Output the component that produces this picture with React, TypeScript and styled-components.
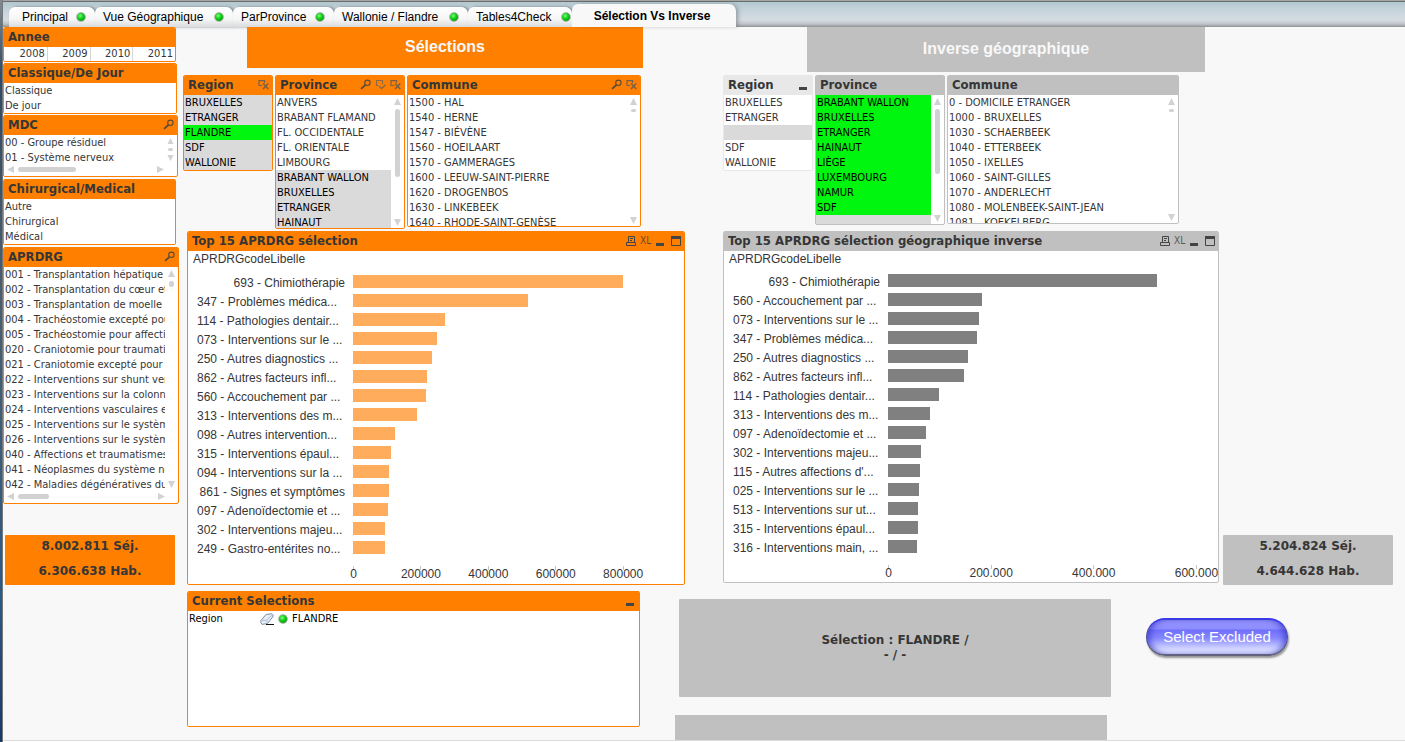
import React from "react";
import styled, { createGlobalStyle, css } from "styled-components";

const ORANGE = "#ff8000";
const GREY = "#c0c0c0";
const INK = "#363636";
const UI = `"DejaVu Sans Condensed", "DejaVu Sans", Tahoma, sans-serif`;
const ARIAL = `"Liberation Sans", Arial, sans-serif`;
const WIDE = `"DejaVu Sans", Verdana, sans-serif`;

const GlobalStyle = createGlobalStyle`
  * { box-sizing: border-box; }
  body { margin: 0; background: #f8f8f8; color: ${INK}; font: 11px/15px ${UI}; }
  button { font: inherit; color: inherit; border: 0; padding: 0; margin: 0; background: none; cursor: pointer; }
  ul { list-style: none; margin: 0; padding: 0; }
  h1, h2, p { margin: 0; }
`;

/* ---------- page frame ---------- */

const Page = styled.div`
  display: flex;
  min-height: 100vh;
  overflow: hidden;
`;

const WindowEdge = styled.div`
  flex: 0 0 3px;
  border-right: 1px solid #777;
  background: linear-gradient(#7f8c94, #2f4a66 10%, #4a5f70 40%, #2b5a86 80%, #173a63);
`;

const Sheet = styled.div`
  flex: 1;
  min-width: 0;
  display: flex;
  flex-direction: column;
  border-bottom: 1px solid #fff;
`;

const TabBar = styled.nav`
  display: flex;
  align-items: flex-end;
  height: 27px;
  padding-left: 6px;
  border-top: 1px solid #a5a5a2;
  box-shadow: inset 0 1px 0 #6a6e6e;
  background: linear-gradient(#b3c8cf 1px, #c3d2d9 8px, #d6dce4 19px, #bfc4ca 23px, #8e9296 26px);
`;

const Tab = styled.button<{ $width: number; $active?: boolean; $tight?: boolean }>`
  display: flex;
  align-items: center;
  justify-content: ${(p) => (p.$active ? "center" : "space-between")};
  width: ${(p) => p.$width}px;
  height: ${(p) => (p.$active ? 23 : 20)}px;
  padding: 0 ${(p) => (p.$tight ? 1 : 9)}px 0 8px;
  border-radius: 6px 7px 0 0;
  font: 12px/18px ${ARIAL};
  color: #000;
  white-space: nowrap;
  background: linear-gradient(#fff, #f6f6f6 60%, #d9dbdd);
  box-shadow: 2px 0 3px rgba(60, 66, 72, 0.55);
  &:first-child { padding-left: 13px; }
  ${(p) =>
    p.$active &&
    css`
      position: relative;
      z-index: 1;
      padding-right: 12px;
      font-weight: bold;
      background: #f8f8f8;
      box-shadow: 3px 0 4px -1px rgba(60, 66, 72, 0.4);
    `}
`;

const Dot = styled.span`
  flex: none;
  width: 10px;
  height: 10px;
  border: 1px solid #b4bab4;
  border-radius: 50%;
  background: radial-gradient(circle at 40% 35%, #7dff7d, #14d01a 40%, #0a9a12 80%);
`;

const Body = styled.div`
  flex: 1;
  display: flex;
  padding-right: 12px;
  border-bottom: 1px solid #dcdcdc;
`;

const Sidebar = styled.aside`
  flex: 0 0 176px;
  display: flex;
  flex-direction: column;
  align-items: flex-start;
  gap: 2px;
`;

const SidebarGroup = styled.div`
  display: flex;
  flex-direction: column;
  gap: 1px;
`;

const Main = styled.main`
  flex: 1;
  min-width: 0;
  margin-left: 4px;
  display: flex;
  flex-direction: column;
`;

const CompareRow = styled.div`
  display: flex;
`;

const Side = styled.section<{ $grow: number; $before?: number }>`
  flex: ${(p) => p.$grow} 1 0;
  min-width: 0;
  margin-left: ${(p) => p.$before ?? 0}px;
`;

const Banner = styled.h1<{ $tone: string; $height: number; $left: number; $right: number }>`
  display: flex;
  align-items: center;
  justify-content: center;
  height: ${(p) => p.$height}px;
  margin: 0 ${(p) => p.$right}px 0 ${(p) => p.$left}px;
  padding-bottom: 2px;
  background: ${(p) => p.$tone};
  color: #f8f8f8;
  font: bold 16px/20px ${ARIAL};
`;

const ListRow = styled.div<{ $top: number; $right: number }>`
  display: flex;
  align-items: flex-start;
  gap: 2px;
  height: 154px;
  margin: ${(p) => p.$top}px ${(p) => p.$right}px 2px 0;
`;

/* ---------- framed object ---------- */

const Frame = styled.section<{ $tone: string; $width?: number; $height?: number; $indent?: number }>`
  display: flex;
  flex-direction: column;
  ${(p) => (p.$width ? `flex: none; width: ${p.$width}px;` : "flex: 1; min-width: 0;")}
  ${(p) => p.$height && `height: ${p.$height}px;`}
  margin-left: ${(p) => p.$indent ?? 0}px;
  border: 1px solid ${(p) => p.$tone};
  border-radius: 2px;
  background: #fff;
  overflow: hidden;
`;

const FrameHead = styled.header<{ $tone: string }>`
  flex: none;
  display: flex;
  align-items: center;
  gap: 4px;
  height: 19px;
  padding: 0 3px 1px 4px;
  background: ${(p) => p.$tone};
`;

const FrameTitle = styled.h2`
  flex: 1;
  min-width: 0;
  overflow: hidden;
  white-space: nowrap;
  font: bold 13px/18px ${UI};
`;

const IconButton = styled.button`
  flex: none;
  display: block;
  width: 11px;
  height: 12px;
  svg { display: block; }
`;

const ExcelButton = styled(IconButton)`
  font: 10px/12px ${UI};
  opacity: 0.75;
`;

const FrameBody = styled.div`
  flex: 1;
  min-height: 0;
  display: flex;
`;

const Items = styled.ul`
  flex: 1;
  min-width: 0;
  overflow: hidden;
`;

type ItemState = "optional" | "selected" | "excluded";

const Item = styled.button<{ $state: ItemState }>`
  display: block;
  width: 100%;
  height: 15px;
  padding-left: 1px;
  text-align: left;
  white-space: nowrap;
  overflow: hidden;
  line-height: 14px;
  background: ${(p) => ({ optional: "#fff", selected: "#00f50f", excluded: "#dadada" })[p.$state]};
  color: ${(p) => (p.$state === "optional" ? INK : "#000")};
`;

const YearRow = styled.div`
  flex: 1;
  display: grid;
  grid-template-columns: repeat(4, 1fr);
`;

const Year = styled.button`
  padding-right: 2px;
  text-align: right;
  line-height: 14px;
  & + & { border-left: 1px solid #d6d6d6; }
`;

/* ---------- scroll bars ---------- */

const VTrack = styled.div`
  flex: 0 0 11px;
  display: flex;
  flex-direction: column;
  align-items: center;
  padding: 3px 0 2px;
`;

const HTrack = styled.div`
  flex: 0 0 11px;
  display: flex;
  align-items: center;
  padding: 0 13px 0 3px;
`;

const Thumb = styled.span<{ $w: number; $h: number }>`
  width: ${(p) => p.$w}px;
  height: ${(p) => p.$h}px;
  margin: 4px;
  border-radius: 3px;
  background: #d2d2d2;
`;

const Spring = styled.span`
  flex: 1;
`;

const Arrow = ({ d }: { d: string }) => (
  <svg width="7" height="7" viewBox="0 0 7 7" aria-hidden="true">
    <path d={d} fill="#d2d2d2" />
  </svg>
);

const VScroll = ({ thumb }: { thumb: number }) => (
  <VTrack>
    <Arrow d="M3.5 0 7 7H0z" />
    <Thumb $w={5} $h={thumb} />
    <Spring />
    <Arrow d="M3.5 7 7 0H0z" />
  </VTrack>
);

const HScroll = ({ thumb }: { thumb: number }) => (
  <HTrack>
    <Arrow d="M0 3.5 7 0V7z" />
    <Thumb $w={thumb} $h={5} />
    <Spring />
    <Arrow d="M7 3.5 0 0V7z" />
  </HTrack>
);

/* ---------- icons ---------- */

type IconName = "search" | "check" | "clear" | "print" | "excel" | "min" | "max";

const drawings: Record<Exclude<IconName, "excel">, React.ReactNode> = {
  search: (
    <g fill="none" stroke="#5c4a36">
      <circle cx="7.4" cy="3.8" r="2.7" strokeWidth="1.1" />
      <path d="M5.4 6 1 9.8" strokeWidth="1.7" />
    </g>
  ),
  check: (
    <g fill="none" stroke="#8a6a48" strokeWidth="1.1">
      <path d="M3.5 6.5H1.5v-5h6V5" />
      <path d="M4.2 7.2l2.3 2.3L10.6 5.8" strokeWidth="1.6" />
    </g>
  ),
  clear: (
    <g fill="none" stroke="#77604a" strokeWidth="1.2">
      <path d="M4 6.5H1V1.7h5.5V4" />
      <path d="M5 4.5l5.2 5.5M10.2 4.5 5 10" strokeWidth="1.6" />
    </g>
  ),
  print: (
    <g fill="none" stroke="#444">
      <path d="M3.5 7.5v-6h6v6M1.5 7.5h9v3h-9zM5 3.5h3M5 5.5h2" />
    </g>
  ),
  min: <path d="M1 8h8v3H1z" fill="#444" />,
  max: (
    <g stroke="#444" fill="none">
      <path d="M1.5 1.5h9v9h-9z" />
      <path d="M1 2.5h10" strokeWidth="3" />
    </g>
  ),
};

const labels: Record<IconName, string> = {
  search: "Rechercher",
  check: "Sélectionner les exclus",
  clear: "Effacer",
  print: "Imprimer",
  excel: "Exporter vers Excel",
  min: "Réduire",
  max: "Agrandir",
};

const HeadIcon = ({ name }: { name: IconName }) =>
  name === "excel" ? (
    <ExcelButton aria-label={labels.excel}>XL</ExcelButton>
  ) : (
    <IconButton aria-label={labels[name]}>
      <svg width="11" height="12" viewBox="0 0 11 12" aria-hidden="true">
        {drawings[name]}
      </svg>
    </IconButton>
  );

/* ---------- list box ---------- */

type Entry = string | [string, ItemState];

type ListBoxProps = {
  title: string;
  items: Entry[];
  tone?: string;
  width?: number;
  height?: number;
  icons?: IconName[];
  vThumb?: number;
  hThumb?: number;
};

const ListBox = ({ title, items, tone = ORANGE, width, height, icons = [], vThumb, hThumb }: ListBoxProps) => (
  <Frame $tone={tone} $width={width} $height={height}>
    <FrameHead $tone={tone}>
      <FrameTitle>{title}</FrameTitle>
      {icons.map((name) => (
        <HeadIcon key={name} name={name} />
      ))}
    </FrameHead>
    <FrameBody>
      <Items>
        {items.map((entry, i) => {
          const [text, state] = typeof entry === "string" ? [entry, "optional" as ItemState] : entry;
          return (
            <li key={i}>
              <Item $state={state}>{text}</Item>
            </li>
          );
        })}
      </Items>
      {vThumb && <VScroll thumb={vThumb} />}
    </FrameBody>
    {hThumb && <HScroll thumb={hThumb} />}
  </Frame>
);

/* ---------- bar chart ---------- */

const ChartBody = styled.div<{ $gap: number }>`
  font: 12px/16px ${ARIAL};
  & > p { padding: 0 5px; margin-bottom: ${(p) => p.$gap}px; }
`;

const BarRow = styled.li<{ $label: number }>`
  display: grid;
  grid-template-columns: ${(p) => p.$label}px minmax(0, 1fr);
  align-items: center;
  height: 19px;
`;

const BarLabel = styled.span<{ $whole: boolean }>`
  padding: 2px 8px 0 9px;
  text-align: ${(p) => (p.$whole ? "right" : "left")};
  white-space: nowrap;
`;

const Bar = styled.span<{ $fill: string }>`
  display: block;
  height: 13px;
  background: ${(p) => p.$fill};
`;

const Axis = styled.div<{ $label: number }>`
  display: flex;
  margin: 9px 0 0 ${(p) => p.$label}px;
`;

const TickCell = styled.span`
  flex: none;
`;

const Tick = styled.span`
  display: flex;
  flex-direction: column;
  align-items: center;
  width: 1px;
  line-height: 9px;
  white-space: nowrap;
  &::before { content: ""; flex: none; width: 1px; height: 4px; background: #c4c4c4; }
`;

type ChartProps = {
  title: string;
  tone: string;
  fill: string;
  height: number;
  indent?: number;
  gap: number;
  label: number;
  max: number;
  ticks: string[];
  data: [string, number][];
};

const BarChart = ({ title, tone, fill, height, indent, gap, label, max, ticks, data }: ChartProps) => (
  <Frame $tone={tone} $height={height} $indent={indent}>
    <FrameHead $tone={tone}>
      <FrameTitle>{title}</FrameTitle>
      <HeadIcon name="print" />
      <HeadIcon name="excel" />
      <HeadIcon name="min" />
      <HeadIcon name="max" />
    </FrameHead>
    <ChartBody $gap={gap}>
      <p>APRDRGcodeLibelle</p>
      <ul>
        {data.map(([name, value]) => (
          <BarRow key={name} $label={label}>
            <BarLabel $whole={!name.endsWith("...")}>{name}</BarLabel>
            <Bar $fill={fill} style={{ width: `${(value / max) * 100}%` }} />
          </BarRow>
        ))}
      </ul>
      <Axis $label={label}>
        {ticks.map((t) => (
          <TickCell key={t} style={{ width: `${(200 / max) * 100}%` }}>
            <Tick>{t}</Tick>
          </TickCell>
        ))}
      </Axis>
    </ChartBody>
  </Frame>
);

/* ---------- totals, summary, action ---------- */

const Totals = styled.div<{ $tone: string }>`
  width: 170px;
  height: 50px;
  border-radius: 1px;
  background: ${(p) => p.$tone};
  text-align: center;
  font: bold 12px/22px ${WIDE};
  p { height: 25px; }
`;

const SidebarTotals = styled.div`
  margin: 29px 0 0 2px;
`;

const FarSide = styled.div`
  flex: none;
  align-self: flex-end;
  margin-left: 4px;
`;

const BottomRow = styled.div`
  flex: 1;
  display: flex;
  align-items: stretch;
  margin: 6px 0 0 4px;
`;

const CurrentSlot = styled.div`
  flex: 453 1 0;
  min-width: 0;
  display: flex;
  align-items: flex-start;
`;

const Selection = styled.div`
  display: grid;
  grid-template-columns: 71px 18px 14px auto;
  align-items: center;
  width: 100%;
  height: 15px;
  padding-left: 1px;
  color: #000;
`;

const SummaryColumn = styled.div`
  flex: 436 1 0;
  min-width: 0;
  display: flex;
  flex-direction: column;
  gap: 18px;
  margin-left: 35px;
  padding-top: 8px;
`;

const Summary = styled.div`
  display: flex;
  align-items: center;
  justify-content: center;
  height: 98px;
  margin-left: 4px;
  border-radius: 1px;
  background: ${GREY};
  text-align: center;
  font: bold 12px/15px ${WIDE};
`;

const SummaryNext = styled.div`
  flex: 1;
  min-height: 25px;
  margin-right: 4px;
  background: ${GREY};
`;

const ActionSlot = styled.div`
  flex: 247 1 0;
  margin-left: 35px;
  padding-top: 27px;
`;

const PillButton = styled.button`
  width: 142px;
  height: 38px;
  padding-bottom: 1px;
  border: 1px solid #4a4a9a;
  border-top: 2px solid #3a3ae6;
  border-bottom: 2px solid #62627e;
  border-radius: 19px;
  color: #fff;
  font: 15px/20px ${ARIAL};
  background: linear-gradient(#9a9aff, #8c8cff 9px, #6f6ffb 10px, #8686ff 18px, #d4d8ff 29px, #e8ecff);
  box-shadow: 1px 2px 2px rgba(0, 0, 0, 0.4), inset 5px 0 6px -2px rgba(40, 40, 190, 0.6),
    inset -5px 0 6px -2px rgba(40, 40, 190, 0.6);
`;

const Eraser = () => (
  <svg width="15" height="13" viewBox="0 0 15 13" aria-hidden="true">
    <path d="M1 7.5 6 1.5 11.5.8 13.3 2l-.6 2L7.5 10.5 2 11.4.8 9.6z" fill="#e6edf7" stroke="#7d8ca6" />
    <path d="M1.2 7.8 6.8 7.2 12.6 1.6M6.8 7.2l.6 3" fill="none" stroke="#b4c0d4" />
    <path d="M6 11.5h8" stroke="#111" />
  </svg>
);

/* ---------- data ---------- */

const tabs = [
  { name: "Principal", width: 86 },
  { name: "Vue Géographique", width: 138 },
  { name: "ParProvince", width: 101 },
  { name: "Wallonie / Flandre", width: 134 },
  { name: "Tables4Check", width: 104, tight: true },
];

const off = (s: string): Entry => [s, "excluded"];
const on = (s: string): Entry => [s, "selected"];

const aprdrg = [
  "001 - Transplantation hépatique",
  "002 - Transplantation du cœur et,",
  "003 - Transplantation de moelle o",
  "004 - Trachéostomie excepté pou",
  "005 - Trachéostomie pour affectio",
  "020 - Craniotomie pour traumatism",
  "021 - Craniotomie excepté pour tr",
  "022 - Interventions sur shunt ven",
  "023 - Interventions sur la colonne",
  "024 - Interventions vasculaires ex",
  "025 - Interventions sur le système",
  "026 - Interventions sur le système",
  "040 - Affections et traumatismes",
  "041 - Néoplasmes du système ner",
  "042 - Maladies dégénératives du s",
];

const selectionData: [string, number][] = [
  ["693 - Chimiothérapie", 801],
  ["347 - Problèmes médica...", 519],
  ["114 - Pathologies dentair...", 273],
  ["073 - Interventions sur le ...", 249],
  ["250 - Autres diagnostics ...", 234],
  ["862 - Autres facteurs infl...", 220],
  ["560 - Accouchement par ...", 217],
  ["313 - Interventions des m...", 190],
  ["098 - Autres intervention...", 125],
  ["315 - Interventions épaul...", 113],
  ["094 - Interventions sur la ...", 107],
  ["861 - Signes et symptômes", 107],
  ["097 - Adenoïdectomie et ...", 104],
  ["302 - Interventions majeu...", 95],
  ["249 - Gastro-entérites no...", 95],
];

const inverseData: [string, number][] = [
  ["693 - Chimiothérapie", 524],
  ["560 - Accouchement par ...", 183],
  ["073 - Interventions sur le ...", 177],
  ["347 - Problèmes médica...", 173],
  ["250 - Autres diagnostics ...", 156],
  ["862 - Autres facteurs infl...", 148],
  ["114 - Pathologies dentair...", 99],
  ["313 - Interventions des m...", 82],
  ["097 - Adenoïdectomie et ...", 74],
  ["302 - Interventions majeu...", 64],
  ["115 - Autres affections d'...", 62],
  ["025 - Interventions sur le ...", 60],
  ["513 - Interventions sur ut...", 58],
  ["315 - Interventions épaul...", 58],
  ["316 - Interventions main, ...", 56],
];

export default function App() {
  return (
    <Page>
      <GlobalStyle />
      <WindowEdge />
      <Sheet>
        <TabBar>
          {tabs.map((t) => (
            <Tab key={t.name} $width={t.width} $tight={t.tight}>
              {t.name}
              <Dot />
            </Tab>
          ))}
          <Tab $width={164} $active>
            Sélection Vs Inverse
          </Tab>
        </TabBar>
        <Body>
          <Sidebar>
            <SidebarGroup>
              <Frame $tone={ORANGE} $width={173} $height={35}>
                <FrameHead $tone={ORANGE}>
                  <FrameTitle>Annee</FrameTitle>
                </FrameHead>
                <YearRow>
                  {["2008", "2009", "2010", "2011"].map((y) => (
                    <Year key={y}>{y}</Year>
                  ))}
                </YearRow>
              </Frame>
              <ListBox title="Classique/De Jour" width={174} height={51} items={["Classique", "De jour"]} />
              <ListBox
                title="MDC"
                width={175}
                height={62}
                icons={["search"]}
                vThumb={3}
                hThumb={58}
                items={["00 - Groupe résiduel", "01 - Système nerveux"]}
              />
            </SidebarGroup>
            <ListBox
              title="Chirurgical/Medical"
              width={173}
              height={66}
              items={["Autre", "Chirurgical", "Médical"]}
            />
            <ListBox title="APRDRG" width={176} height={257} icons={["search"]} vThumb={6} hThumb={31} items={aprdrg} />
            <SidebarTotals>
              <Totals $tone={ORANGE}>
                <p>8.002.811 Séj.</p>
                <p>6.306.638 Hab.</p>
              </Totals>
            </SidebarTotals>
          </Sidebar>

          <Main>
            <CompareRow>
              <Side $grow={502}>
                <Banner $tone={ORANGE} $height={41} $left={64} $right={42}>
                  Sélections
                </Banner>
                <ListRow $top={7} $right={44}>
                  <ListBox
                    title="Region"
                    width={90}
                    height={96}
                    icons={["clear"]}
                    items={[off("BRUXELLES"), off("ETRANGER"), on("FLANDRE"), off("SDF"), off("WALLONIE")]}
                  />
                  <ListBox
                    title="Province"
                    width={130}
                    height={154}
                    icons={["search", "check", "clear"]}
                    vThumb={68}
                    items={[
                      "ANVERS",
                      "BRABANT FLAMAND",
                      "FL. OCCIDENTALE",
                      "FL. ORIENTALE",
                      "LIMBOURG",
                      off("BRABANT WALLON"),
                      off("BRUXELLES"),
                      off("ETRANGER"),
                      off("HAINAUT"),
                    ]}
                  />
                  <ListBox
                    title="Commune"
                    height={152}
                    icons={["search", "clear"]}
                    vThumb={3}
                    items={[
                      "1500 - HAL",
                      "1540 - HERNE",
                      "1547 - BIÉVÈNE",
                      "1560 - HOEILAART",
                      "1570 - GAMMERAGES",
                      "1600 - LEEUW-SAINT-PIERRE",
                      "1620 - DROGENBOS",
                      "1630 - LINKEBEEK",
                      "1640 - RHODE-SAINT-GENÈSE",
                    ]}
                  />
                </ListRow>
                <BarChart
                  title="Top 15 APRDRG sélection"
                  tone={ORANGE}
                  fill="#ffad5c"
                  height={354}
                  indent={4}
                  gap={5}
                  label={165}
                  max={982}
                  ticks={["0", "200000", "400000", "600000", "800000"]}
                  data={selectionData}
                />
              </Side>

              <Side $grow={496} $before={38}>
                <Banner $tone={GREY} $height={45} $left={84} $right={14}>
                  Inverse géographique
                </Banner>
                <ListRow $top={3} $right={40}>
                  <ListBox
                    title="Region"
                    tone="#e8e8e8"
                    width={90}
                    height={96}
                    icons={["min"]}
                    items={["BRUXELLES", "ETRANGER", off(""), "SDF", "WALLONIE"]}
                  />
                  <ListBox
                    title="Province"
                    tone={GREY}
                    width={130}
                    height={150}
                    vThumb={65}
                    items={[
                      on("BRABANT WALLON"),
                      on("BRUXELLES"),
                      on("ETRANGER"),
                      on("HAINAUT"),
                      on("LIÈGE"),
                      on("LUXEMBOURG"),
                      on("NAMUR"),
                      on("SDF"),
                      off(""),
                    ]}
                  />
                  <ListBox
                    title="Commune"
                    tone={GREY}
                    height={149}
                    vThumb={3}
                    items={[
                      "0 - DOMICILE ETRANGER",
                      "1000 - BRUXELLES",
                      "1030 - SCHAERBEEK",
                      "1040 - ETTERBEEK",
                      "1050 - IXELLES",
                      "1060 - SAINT-GILLES",
                      "1070 - ANDERLECHT",
                      "1080 - MOLENBEEK-SAINT-JEAN",
                      "1081 - KOEKELBERG",
                    ]}
                  />
                </ListRow>
                <BarChart
                  title="Top 15 APRDRG sélection géographique inverse"
                  tone={GREY}
                  fill="#808080"
                  height={352}
                  gap={4}
                  label={164}
                  max={643}
                  ticks={["0", "200.000", "400.000", "600.000"]}
                  data={inverseData}
                />
              </Side>

              <FarSide>
                <Totals $tone={GREY}>
                  <p>5.204.824 Séj.</p>
                  <p>4.644.628 Hab.</p>
                </Totals>
              </FarSide>
            </CompareRow>

            <BottomRow>
              <CurrentSlot>
                <Frame $tone={ORANGE} $height={136}>
                  <FrameHead $tone={ORANGE}>
                    <FrameTitle>Current Selections</FrameTitle>
                    <HeadIcon name="min" />
                  </FrameHead>
                  <Selection>
                    <span>Region</span>
                    <IconButton aria-label="Effacer Region">
                      <Eraser />
                    </IconButton>
                    <Dot />
                    <span>FLANDRE</span>
                  </Selection>
                </Frame>
              </CurrentSlot>
              <SummaryColumn>
                <Summary>
                  <p>
                    Sélection : FLANDRE /
                    <br />- / -
                  </p>
                </Summary>
                <SummaryNext />
              </SummaryColumn>
              <ActionSlot>
                <PillButton>Select Excluded</PillButton>
              </ActionSlot>
            </BottomRow>
          </Main>
        </Body>
      </Sheet>
    </Page>
  );
}
